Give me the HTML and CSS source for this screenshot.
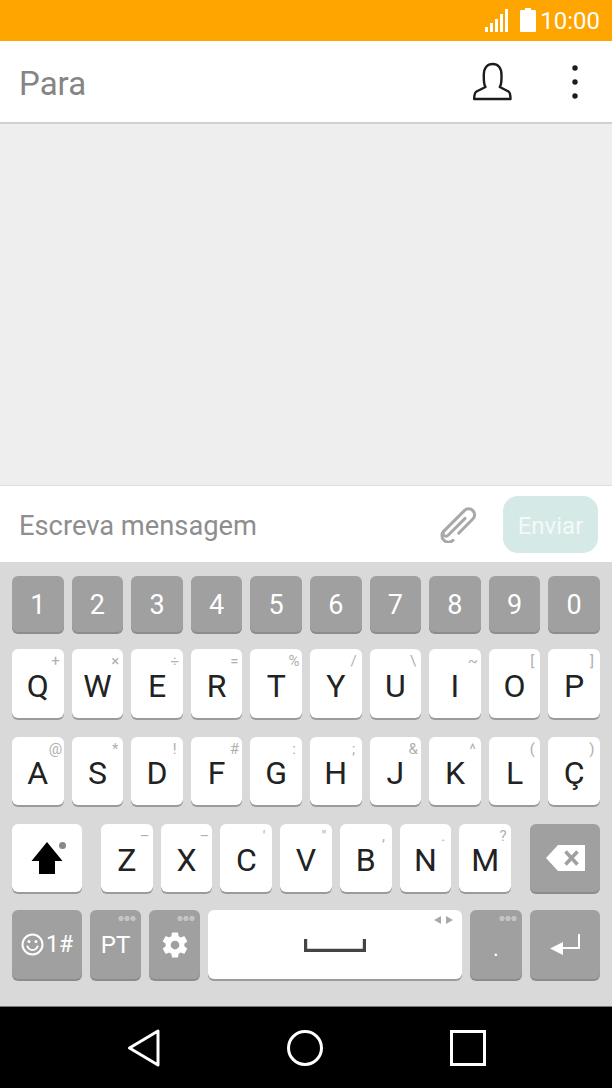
FILE: index.html
```html
<!DOCTYPE html>
<html lang="pt">
<head>
<meta charset="utf-8">
<title>Para</title>
<link rel="stylesheet" href="styles.css">
</head>
<body>
<div class="phone">
  <div class="status">
    <svg class="signal" width="25" height="25" viewBox="0 0 25 25"><g fill="#fff"><rect x="0" y="19" width="3" height="5"/><rect x="5" y="15" width="3" height="9"/><rect x="10" y="11" width="3" height="13"/><rect x="15" y="6" width="3" height="18"/><rect x="20" y="1" width="3" height="23"/></g></svg>
    <svg class="battery" width="16" height="25" viewBox="0 0 16 25"><path fill="#fff" d="M5 0h6v2h4a1 1 0 0 1 1 1v20a1 1 0 0 1-1 1H1a1 1 0 0 1-1-1V3a1 1 0 0 1 1-1h4z"/></svg>
    <span class="clock">10:00</span>
  </div>
  <header class="top">
    <span class="to">Para</span>
    <svg class="person" width="40" height="40" viewBox="0 0 40 40"><path fill="none" stroke="#1c1c1c" stroke-width="2.400" stroke-linejoin="round" d="M12.500 25C10.500 22 10.800 17 10.800 13C10.800 6 14.500 2 19.700 2S28.500 6 28.500 13C28.500 17 28.800 22 26.800 25L35.500 29.500C37 30.500 37.500 33 37.500 37H1.200C1.200 33 1.800 30.500 3.500 29.500Z"/></svg>
    <svg class="more" width="8" height="36" viewBox="0 0 8 36"><g fill="#1c1c1c"><circle cx="4" cy="4" r="2.700"/><circle cx="4" cy="18" r="2.700"/><circle cx="4" cy="32" r="2.700"/></g></svg>
  </header>
  <main class="thread"></main>
  <div class="compose">
    <span class="hint">Escreva mensagem</span>
    <svg class="clip" width="38" height="38" viewBox="-19 -19 38 38"><path transform="rotate(45)" fill="none" stroke="#a8a8a8" stroke-width="3" stroke-linecap="round" d="M7 6V-14a6 6 0 0 0-12 0V15a6.500 6.500 0 0 0 13 0"/><path transform="rotate(45)" fill="none" stroke="#a8a8a8" stroke-width="3" stroke-linecap="round" d="M-5 15a2.500 2.500 0 0 0 6 0V-9"/></svg>
    <button class="send">Enviar</button>
  </div>
  <div class="keyboard">
    <div class="row row-num">
      <div class="key dark num">1</div><div class="key dark num">2</div><div class="key dark num">3</div><div class="key dark num">4</div><div class="key dark num">5</div><div class="key dark num">6</div><div class="key dark num">7</div><div class="key dark num">8</div><div class="key dark num">9</div><div class="key dark num">0</div>
    </div>
    <div class="row row-q">
      <div class="key">Q<i>+</i></div><div class="key">W<i>×</i></div><div class="key">E<i>÷</i></div><div class="key">R<i>=</i></div><div class="key">T<i>%</i></div><div class="key">Y<i>/</i></div><div class="key">U<i>\</i></div><div class="key">I<i>~</i></div><div class="key">O<i>[</i></div><div class="key">P<i>]</i></div>
    </div>
    <div class="row row-a">
      <div class="key">A<i>@</i></div><div class="key">S<i>*</i></div><div class="key">D<i>!</i></div><div class="key">F<i>#</i></div><div class="key">G<i>:</i></div><div class="key">H<i>;</i></div><div class="key">J<i>&amp;</i></div><div class="key">K<i>^</i></div><div class="key">L<i>(</i></div><div class="key">Ç<i>)</i></div>
    </div>
    <div class="row row-z">
      <div class="key wide">
        <svg width="32" height="34" viewBox="0 0 32 34"><path fill="#000" d="M16 1L31.500 20H24V33H8V20H.5z"/></svg>
        <b class="shift-dot"></b>
      </div>
      <div class="letters">
        <div class="key">Z<i>–</i></div><div class="key">X<i>–</i></div><div class="key">C<i>'</i></div><div class="key">V<i>"</i></div><div class="key">B<i>,</i></div><div class="key">N<i>.</i></div><div class="key">M<i>?</i></div>
      </div>
      <div class="key wide dark">
        <svg width="39" height="26" viewBox="0 0 39 26"><path fill="#fff" d="M12 0H39V26H12L0 13z"/><path stroke="#a0a0a0" stroke-width="3.600" d="M19.500 6.500L31.500 19.500M31.500 6.500L19.500 19.500"/></svg>
      </div>
    </div>
    <div class="row row-bottom">
      <div class="key wide dark sym">
        <svg width="23" height="23" viewBox="0 0 23 23"><g fill="none" stroke="#fff" stroke-width="2"><circle cx="11.500" cy="11.500" r="10"/><path stroke-linecap="round" d="M6.500 13.500c1 2.500 3 3.500 5 3.500s4-1 5-3.500"/></g><circle cx="8" cy="8.500" r="1.500" fill="#fff"/><circle cx="15" cy="8.500" r="1.500" fill="#fff"/></svg>
        <span>1#</span>
      </div>
      <div class="key dark fn pt">PT<u class="dots"></u></div>
      <div class="key dark fn gear">
        <svg width="30" height="30" viewBox="0 0 24 24"><path fill="#fff" d="M19.430 12.980c.04-.32.070-.64.070-.98s-.03-.66-.07-.98l2.110-1.650c.19-.15.240-.42.120-.64l-2-3.460c-.12-.22-.39-.3-.61-.22l-2.490 1c-.52-.4-1.080-.73-1.690-.98l-.38-2.650C14.460 2.180 14.250 2 14 2h-4c-.25 0-.46.18-.49.420l-.38 2.650c-.61.25-1.170.59-1.690.98l-2.490-1c-.23-.09-.49 0-.61.22l-2 3.460c-.13.220-.07.490.12.640l2.110 1.650c-.04.320-.07.650-.07.980s.03.660.07.980l-2.110 1.650c-.19.150-.24.420-.12.640l2 3.460c.12.220.39.300.61.220l2.490-1c.52.400 1.080.730 1.690.980l.38 2.650c.03.240.24.420.49.420h4c.25 0 .46-.18.490-.42l.38-2.650c.61-.25 1.170-.59 1.690-.98l2.490 1c.23.090.49 0 .61-.22l2-3.460c.12-.22.070-.49-.12-.64l-2.110-1.650zM12 15.500c-1.930 0-3.500-1.570-3.500-3.500s1.570-3.500 3.500-3.500 3.500 1.570 3.500 3.500-1.570 3.500-3.500 3.500z"/></svg>
        <u class="dots"></u>
      </div>
      <div class="key space">
        <svg class="bar" width="62" height="15" viewBox="0 0 62 15"><path fill="none" stroke="#444" stroke-width="3.200" d="M1.600 1v11.400h58.800V1"/></svg>
        <svg class="arrows" width="19" height="8" viewBox="0 0 19 8"><path fill="#aaa" d="M7 0v8L0 4zM12 0v8l7-4z"/></svg>
      </div>
      <div class="key dark fn period">.<u class="dots"></u></div>
      <div class="key wide dark">
        <svg width="30" height="22" viewBox="0 0 30 22"><path fill="#fff" d="M28 0h2V15H13v6L0 14.500 13 8v5H28z"/></svg>
      </div>
    </div>
  </div>
  <nav class="nav">
    <svg width="34" height="38" viewBox="0 0 34 38"><path fill="none" stroke="#fff" stroke-width="3" stroke-linejoin="round" d="M32 2V36L3.500 19z"/></svg>
    <svg width="38" height="38" viewBox="0 0 38 38"><circle cx="19" cy="19" r="16.500" fill="none" stroke="#fff" stroke-width="3"/></svg>
    <svg width="36" height="36" viewBox="0 0 36 36"><rect x="1.500" y="1.500" width="33" height="33" fill="none" stroke="#fff" stroke-width="3"/></svg>
  </nav>
</div>
</body>
</html>
```
FILE: styles.css
```css
* { box-sizing: border-box; }
html, body { margin: 0; padding: 0; }
body { font-family: Roboto, "Liberation Sans", sans-serif; background: #fff; }
.phone { width: 612px; height: 1088px; display: flex; flex-direction: column; overflow: hidden; }

.status { height: 41px; background: #ffa500; display: flex; align-items: center; justify-content: flex-end; padding: 0 12px 0 0; color: #fff; }
.signal { margin-right: 10px; }
.battery { margin-right: 4px; }
.clock { font-size: 24px; line-height: 41px; padding-top: 1px; }

.top { height: 83px; background: #fff; border-bottom: 2px solid #d0d0d0; display: flex; align-items: center; padding: 0 33px 0 18px; }
.to { font-size: 33px; color: #858585; flex: 1; padding: 3px 0 0 1px; }
.person { margin-right: 58px; }

.thread { flex: 1; background: #eeeeee; }

.compose { height: 77px; background: #fff; border-top: 1px solid #dedede; display: flex; align-items: center; padding: 0 14px 0 19px; }
.hint { flex: 1; font-size: 27.300px; color: #8e8e8e; padding-top: 3px; }
.clip { margin-right: 26px; }
.send { width: 95px; height: 57px; border: 0; border-radius: 15px; background: #d5e9e6; color: #f4f9f8; font: 24px Roboto, sans-serif; padding: 4px 0 0; }

.keyboard { height: 444px; background: #d9d9d9; padding: 14px 12px 0; display: flex; flex-direction: column; }
.row { display: flex; gap: 8px; }
.row-num { height: 56px; }
.row-q { height: 69px; margin-top: 17px; }
.row-a { height: 68px; margin-top: 19px; }
.row-z { height: 68px; margin-top: 19px; gap: 19px; }
.row-bottom { height: 69px; margin-top: 18px; }
.letters { flex: 1; display: flex; gap: 8px; }

.key { position: relative; flex: 1; min-width: 0; background: #fff; border-radius: 6px; box-shadow: 0 2px 0 #9b9b9b; display: flex; align-items: center; justify-content: center; gap: 2px; color: #222; font-size: 32px; padding-top: 4px; }
.key i { position: absolute; top: 3px; right: 0; width: 16px; text-align: center; font-style: normal; font-size: 15px; line-height: 18px; color: #b0b0b0; }
.key.dark { background: #a0a0a0; color: #fff; box-shadow: 0 2px 0 #8c8c8c; }
.key.num { font-size: 27px; padding-top: 2px; }
.key.wide { flex: 0 0 70px; padding-top: 0; }
.key.fn { flex: 0 0 51px; font-size: 24px; padding-top: 1px; }
.key.sym { font-size: 23px; padding-top: 0; }
.key.sym span { line-height: 1; }
.key.gear { flex-basis: 51px; }
.key.space { flex: 1; padding-top: 2px; }
.key.period { flex-basis: 52px; font-size: 22px; padding-top: 8px; }
.arrows { position: absolute; top: 6px; right: 9px; }
.shift-dot { position: absolute; width: 7px; height: 7px; border-radius: 50%; background: #888; top: 18px; right: 16px; }
.dots { position: absolute; top: 6px; right: 5px; width: 18px; height: 5px; background: radial-gradient(circle, #c4c4c4 2.400px, transparent 2.800px) 0 0 / 6px 5px repeat-x; }

.nav { height: 82px; background: #000; border-top: 1px solid #777; display: flex; align-items: center; padding: 0 126px; justify-content: space-between; }
```
